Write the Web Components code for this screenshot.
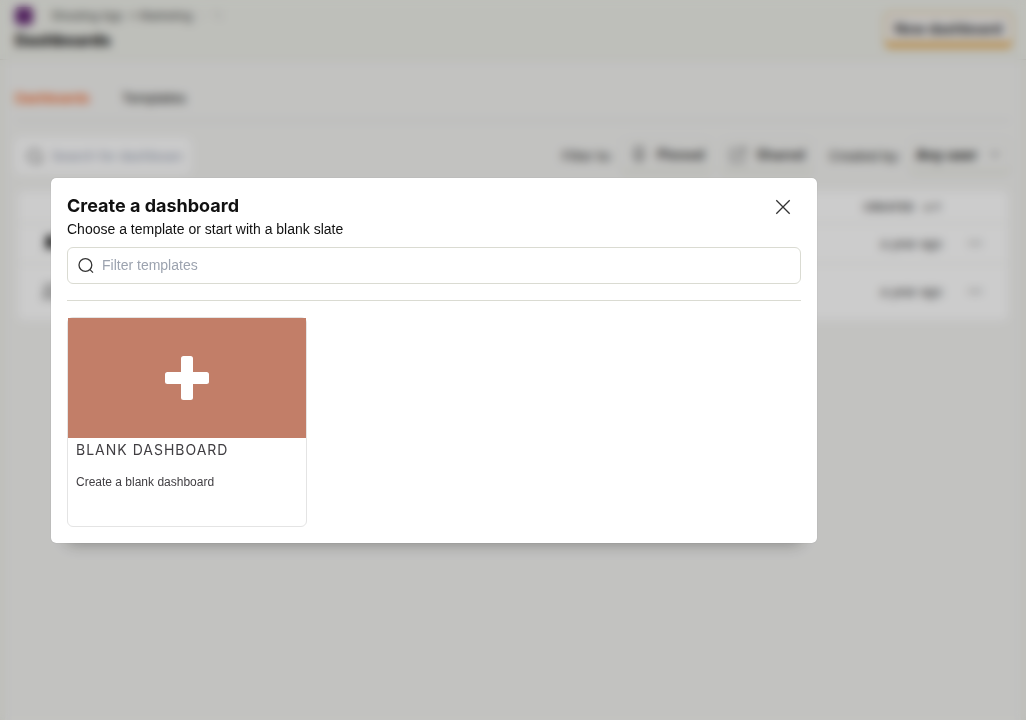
<!DOCTYPE html>
<html lang="en">
<head>
<meta charset="utf-8">
<meta name="viewport" content="width=device-width, initial-scale=1">
<title>Dashboards</title>
<style>
  html, body { height: 100%; }
  body {
    margin: 0;
    font: 14px/20px "Liberation Sans", Arial, sans-serif;
    font-optical-sizing: none;
    color: #111;
    background: #f3f3f1;
    --line: #dadbd2;
    --chrome: #eeefe9;
    --heading: Inter, "Liberation Sans", sans-serif;
  }
</style>
</head>
<body>
<dash-page inert>
  <dash-header slot="header"></dash-header>
  <dash-tabs></dash-tabs>
  <dash-filters></dash-filters>
  <dash-table></dash-table>
</dash-page>
<modal-layer>
  <template-dialog heading="Create a dashboard" text="Choose a template or start with a blank slate">
    <template-card name="Blank dashboard">Create a blank dashboard</template-card>
  </template-dialog>
</modal-layer>

<script>
  const define = (name, markup, setup) => customElements.define(name, class extends HTMLElement {
    connectedCallback() {
      if (this.shadowRoot) return;
      const t = document.createElement('template');
      t.innerHTML = markup;
      this.attachShadow({ mode: 'open' }).append(t.content.cloneNode(true));
      if (setup) setup(this, this.shadowRoot);
    }
  });

  const searchIcon = `<svg width="20" height="20" viewBox="0 0 20 20" fill="none" stroke="currentColor" stroke-width="1.3" aria-hidden="true"><circle cx="9.4" cy="10" r="6.4"/><path d="M14 14.6l3 3"/></svg>`;

  define('dash-page', `
    <style>
      :host { display: flex; flex-direction: column; min-height: 100vh; background: var(--chrome); }
      main { flex: 1; margin: 0 5px; padding: 0 10px; background: #f3f3f1; }
    </style>
    <slot name="header"></slot>
    <main><slot></slot></main>`);

  define('dash-header', `
    <style>
      :host { display: flex; align-items: center; justify-content: space-between; height: 60px; padding: 0 13px 0 15px; background: var(--chrome); border-bottom: 1px solid var(--line); box-sizing: border-box; }
      div { padding-bottom: 4px; }
      nav { display: flex; align-items: center; font-size: 12px; line-height: 20px; color: #444; white-space: pre; }
      i { width: 18px; height: 18px; margin-right: 18px; border-radius: 4px; background: #692f78; }
      span { color: #bbb; }
      h1 { margin: 4px 0 0; font: 800 16px/20px var(--heading); font-optical-sizing: none; }
      button { height: 36px; padding: 2px 9px 0; border: 2px solid #e2c48e; border-bottom: 6px solid #e2a94f; border-radius: 6px; background: #f3f1f0; font: 700 14px/20px var(--heading); color: #333; }
    </style>
    <div>
      <nav aria-label="Breadcrumb"><i></i>Shooting App  &gt; Marketing <span> ›   ✎</span></nav>
      <h1>Dashboards</h1>
    </div>
    <button type="button">New dashboard</button>`);

  define('dash-tabs', `
    <style>
      :host { display: flex; gap: 32px; height: 60px; align-items: flex-end; border-bottom: 1px solid var(--line); }
      a { padding-bottom: 12px; color: #333; font: 500 13px/20px var(--heading); text-decoration: none; }
      .on { color: #f54e00; }
    </style>
    <a class="on" href="#dashboards">Dashboards</a><a href="#templates">Templates</a>`);

  define('dash-filters', `
    <style>
      :host { display: flex; align-items: center; gap: 16px; padding: 17px 0; font: 500 13px/20px var(--heading); color: #444; }
      label.search { display: flex; align-items: center; gap: 6px; width: 166px; height: 36px; padding: 0 0 0 10px; background: #fff; border-radius: 6px; margin-right: auto; }
      input { width: 132px; padding: 0; border: 0; background: none; font: 14px/20px "Liberation Sans", sans-serif; }
      input::placeholder { color: #9aa2b4; }
      svg { flex: none; }
      .group { display: flex; align-items: center; gap: 8px; }
      button, select { height: 36px; border: 1px solid #e6e6de; border-bottom: 4px solid #e4e5db; border-radius: 6px; background: #f3f3f1; font: 700 14px/20px var(--heading); color: #444; }
      button { display: flex; align-items: center; gap: 8px; padding: 0 7px; }
      select { appearance: none; width: 102px; padding: 0 6px; color: #222; }
      .user { position: relative; }
      .user svg { position: absolute; right: 10px; top: 10px; color: #999; }
    </style>
    <label class="search">${searchIcon}<input type="text" placeholder="Search for dashboards" aria-label="Search for dashboards"></label>
    <div class="group"><span>Filter to:</span>
      <button type="button"><svg width="20" height="20" viewBox="0 0 20 20" fill="none" stroke="currentColor" stroke-width="1.4"><path d="M6 3h8l-1 7 2 3H5l2-3zM10 13v5"/></svg>Pinned</button>
      <button type="button"><svg width="20" height="20" viewBox="0 0 20 20" fill="none" stroke="currentColor" stroke-width="1.2"><path d="M9 4H3v13h13v-6M8 12l9-9M12 3h5v5"/></svg>Shared</button>
    </div>
    <div class="group user"><label for="user">Created by:</label><select id="user"><option>Any user</option></select><svg width="12" height="12" viewBox="0 0 12 12" fill="none" stroke="currentColor" stroke-width="2"><path d="M2 4l4 4 4-4"/></svg></div>`);

  define('dash-table', `
    <style>
      :host { display: block; margin: 0 3px; }
      table { width: 100%; border-collapse: collapse; background: #fff; border-radius: 6px; }
      tbody tr { border-top: 1px solid #eaebe3; }
      th { height: 32px; padding: 0; font: 600 11px/16px var(--heading); color: #444; }
      td { padding: 0; height: 39px; color: #333; font-size: 13px; }
      tbody tr:last-child td { height: 56px; }
      .pin { width: 42px; text-align: right; }
      .pin svg { display: inline-block; vertical-align: middle; }
      .date { text-align: right; }
      .more { width: 66px; text-align: center; color: #999; }
    </style>
    <table>
      <thead><tr><th></th><th></th><th class="date">CREATED &nbsp; ↓↑</th><th></th></tr></thead>
      <tbody>
        <tr><td class="pin"><svg width="18" height="18"><path d="M4 1h10l-1 8 3 4H2l3-4z" fill="#000"/></svg></td><td></td><td class="date">a year ago</td><td class="more">•••</td></tr>
        <tr><td class="pin"><svg width="18" height="18"><path d="M4 2h10l-1 7 3 4H2l3-4z" fill="none" stroke="#555" stroke-width="2"/></svg></td><td></td><td class="date">a year ago</td><td class="more">•••</td></tr>
      </tbody>
    </table>`);

  define('modal-layer', `
    <style>
      :host { position: fixed; inset: 0; display: grid; align-items: center; padding: 0 209px 0 51px; background: rgba(0, 0, 0, .2); backdrop-filter: blur(5px); }
    </style>
    <slot></slot>`);

  define('template-dialog', `
    <style>
      :host { display: block; padding: 16px; border-radius: 5px; background: #fff; box-shadow: 0 16px 16px -16px rgba(0, 0, 0, .35), 0 0 1px rgba(0, 0, 0, .3); }
      header { display: flex; justify-content: space-between; align-items: flex-start; }
      h2 { margin: 0; font: 700 18px/24px var(--heading); font-optical-sizing: none; color: #111; }
      p { margin: 0; line-height: 22px; }
      header button { display: grid; place-items: center; width: 36px; height: 26px; padding: 0; border: 0; background: none; color: #333; }
      .filter { display: flex; align-items: center; gap: 6px; height: 35px; margin: 7px 0 16px; padding: 0 8px; border: 1px solid var(--line); border-radius: 6px; color: #333; }
      input { flex: 1; min-width: 0; padding: 0; border: 0; outline: 0; background: none; font: inherit; }
      input::placeholder { color: #9ca3af; opacity: 1; }
      .grid { display: grid; grid-template-columns: repeat(auto-fill, 240px); gap: 16px; padding-top: 16px; border-top: 1px solid var(--line); }
    </style>
    <header>
      <div><h2></h2><p></p></div>
      <button type="button" aria-label="Close"><svg width="16" height="16" viewBox="0 0 16 16" fill="none" stroke="currentColor" stroke-width="1.3"><path d="M1.3 1.3l13.4 13.4M14.7 1.3L1.3 14.7"/></svg></button>
    </header>
    <label class="filter">${searchIcon}<input type="text" placeholder="Filter templates" aria-label="Filter templates"></label>
    <div class="grid"><slot></slot></div>`,
    (el, root) => {
      el.setAttribute('role', 'dialog');
      el.setAttribute('aria-label', el.getAttribute('heading'));
      root.querySelector('h2').textContent = el.getAttribute('heading');
      root.querySelector('p').textContent = el.getAttribute('text');
    });

  define('template-card', `
    <style>
      :host { display: flex; flex-direction: column; min-height: 208px; border: 1px solid #e4e4e4; border-radius: 6px; cursor: pointer; color: #403e42; }
      .cover { display: grid; place-items: center; height: 120px; background: #c27e68; }
      h3 { margin: 0; padding: 0 8px; font: 400 14px/24px var(--heading); letter-spacing: 1px; text-transform: uppercase; }
      p { margin: 0; padding: 12px 8px; font-size: 12px; line-height: 16px; }
    </style>
    <div class="cover"><svg width="44" height="44" viewBox="0 0 44 44" fill="#fff" aria-hidden="true"><rect x="16" width="12" height="44" rx="2.5"/><rect y="16" width="44" height="12" rx="2.5"/></svg></div>
    <h3></h3>
    <p><slot></slot></p>`,
    (el, root) => { root.querySelector('h3').textContent = el.getAttribute('name'); });
</script>
</body>
</html>
